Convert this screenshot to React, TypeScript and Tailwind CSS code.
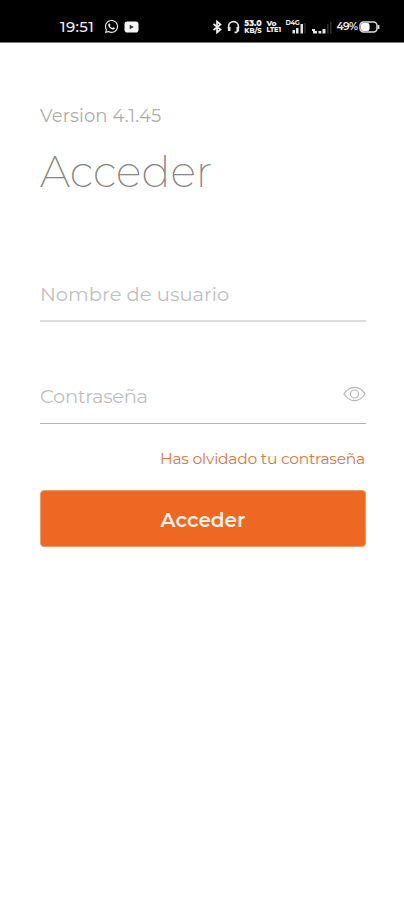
import { FaWhatsapp } from "react-icons/fa";

function SignalBars({ dim }: { dim?: boolean }) {
  return (
    <svg width="20" height="14" viewBox="0 0 20 14" fill="#e4e4e4">
      {dim ? (
        <>
          <path d="M0 9h3v2h2v2.5H1V11H0Z" />
          <rect x="6.5" y="11" width="2.8" height="2.5" />
          <rect x="10.5" y="9" width="3" height="4.5" />
          <rect x="15" y="4" width="1.6" height="9.5" fill="#2c2c2c" />
          <rect x="18" y="2" width="1.6" height="11.5" fill="#2c2c2c" />
        </>
      ) : (
        <>
          <rect x="6.5" y="10" width="2.5" height="3.5" />
          <rect x="10" y="8" width="2.5" height="5.5" />
          <rect x="14.5" y="4" width="2.5" height="9.5" />
          <rect x="18.3" y="3" width="1.4" height="10.5" fill="#333" />
        </>
      )}
    </svg>
  );
}

function StatusBar() {
  return (
    <header className="flex h-[43px] items-center border-b border-[#777] bg-black pt-[11px] pl-[60px] text-[#eee]">
      <span className="w-[44px] shrink-0 text-[15px] leading-4 font-medium tracking-[0.35px] whitespace-nowrap">19:51</span>
      <FaWhatsapp className="size-[15px] shrink-0" />
      <svg className="ml-[4.5px] shrink-0" width="15" height="12" viewBox="0 0 15 12">
        <rect x="0.5" y="0.5" width="14" height="11" rx="2.8" fill="#f5f5f5" />
        <path d="M5.7 3.8 9.8 6 5.7 8.2Z" fill="#333" />
      </svg>
      <svg className="ml-[73px] shrink-0" width="11" height="14" viewBox="0 0 11 14" fill="none" stroke="#eee" strokeWidth="1.7">
        <path d="M1.5 4 8.5 9.5 5 12.5V1.5L8.5 4.5 1.5 10" />
      </svg>
      <svg className="ml-[4px] shrink-0" width="13" height="14" viewBox="0 0 13 14" fill="none" stroke="#e4e4e4">
        <path d="M1.6 8V6.5a4.9 4.9 0 0 1 9.8 0V8M11.3 10c-.4 1.6-1.6 2.5-3.8 2.5" strokeWidth="1.7" />
        <path d="M2.2 7v4M10.8 7v4" strokeWidth="2.6" />
      </svg>
      <div className="ml-[4px] flex w-[19px] shrink-0 flex-col items-center font-extrabold">
        <span className="text-[8px] leading-[8px]">53.0</span>
        <span className="text-[6.8px] leading-[7px]">KB/S</span>
      </div>
      <div className="ml-[4px] flex w-[15px] shrink-0 flex-col font-extrabold">
        <span className="text-[7.5px] leading-[7px] tracking-[-0.4px]">Vo</span>
        <span className="text-[6.5px] leading-[7px] whitespace-nowrap">LTE1</span>
      </div>
      <div className="relative ml-[4px] h-[14px] w-5 shrink-0">
        <SignalBars />
        <span className="absolute top-0 left-0 text-[6.5px] leading-[7px] font-bold tracking-[-0.3px] whitespace-nowrap">D4G</span>
      </div>
      <div className="ml-[6px] shrink-0"><SignalBars dim /></div>
      <span className="ml-[5px] w-[22px] shrink-0 text-[10.5px] leading-3 font-semibold tracking-[-0.6px] whitespace-nowrap">49%</span>
      <svg className="shrink-0" width="21" height="12" viewBox="0 0 21 12">
        <rect x="1" y="1" width="17" height="10" rx="3.5" fill="none" stroke="#ddd" strokeWidth="1.5" />
        <rect x="2" y="2" width="8.5" height="8" rx="2" fill="#fff" />
        <path d="M19.5 4v4" stroke="#ddd" strokeWidth="1.8" />
      </svg>
    </header>
  );
}

export default function App() {
  return (
    <div className="flex h-[900px] w-[404px] flex-col overflow-hidden bg-white font-['Montserrat','Inter',sans-serif]">
      <StatusBar />
      <main className="flex flex-col pr-[38px] pl-10">
        <p className="mt-[61px] h-6 text-[18px] leading-6 tracking-[0.13px] text-[#adadad]">Version 4.1.45</p>
        <h1 className="mt-[16px] h-14 text-[43px] leading-14 font-extralight text-[#858585]">Acceder</h1>
        <div className="mt-[82px] flex h-[40px] items-start border-b-2 border-[#dedede]">
          <span className="text-[19.5px] leading-6 tracking-[0.02px] whitespace-nowrap text-[#bfbfbf]">Nombre de usuario</span>
        </div>
        <div className="mt-[62px] flex h-[40px] items-start justify-between border-b border-[#b5b5b5]">
          <span className="text-[19.5px] leading-6 tracking-[-0.35px] whitespace-nowrap text-[#bfbfbf]">Contraseña</span>
          <svg width="23" height="20" viewBox="0 0 23 20" fill="none" stroke="#b5b5b5" strokeWidth="1.2">
            <path d="M1 10C6.5 1.2 16.5 1.2 22 10 16.5 18.8 6.5 18.8 1 10Z" />
            <circle cx="11.5" cy="10" r="4" />
          </svg>
        </div>
        <a className="mt-[23px] mr-px h-6 self-end text-[15.5px] leading-6 tracking-[-0.23px] whitespace-nowrap text-[#d37a45]">Has olvidado tu contraseña</a>
        <button className="mt-[19px] h-[57px] rounded-[4px] border border-[#f39a63] bg-[#ef6823] pt-[2px] text-[20px] leading-6 font-semibold text-[#fff3e7]">Acceder</button>
      </main>
    </div>
  );
}
